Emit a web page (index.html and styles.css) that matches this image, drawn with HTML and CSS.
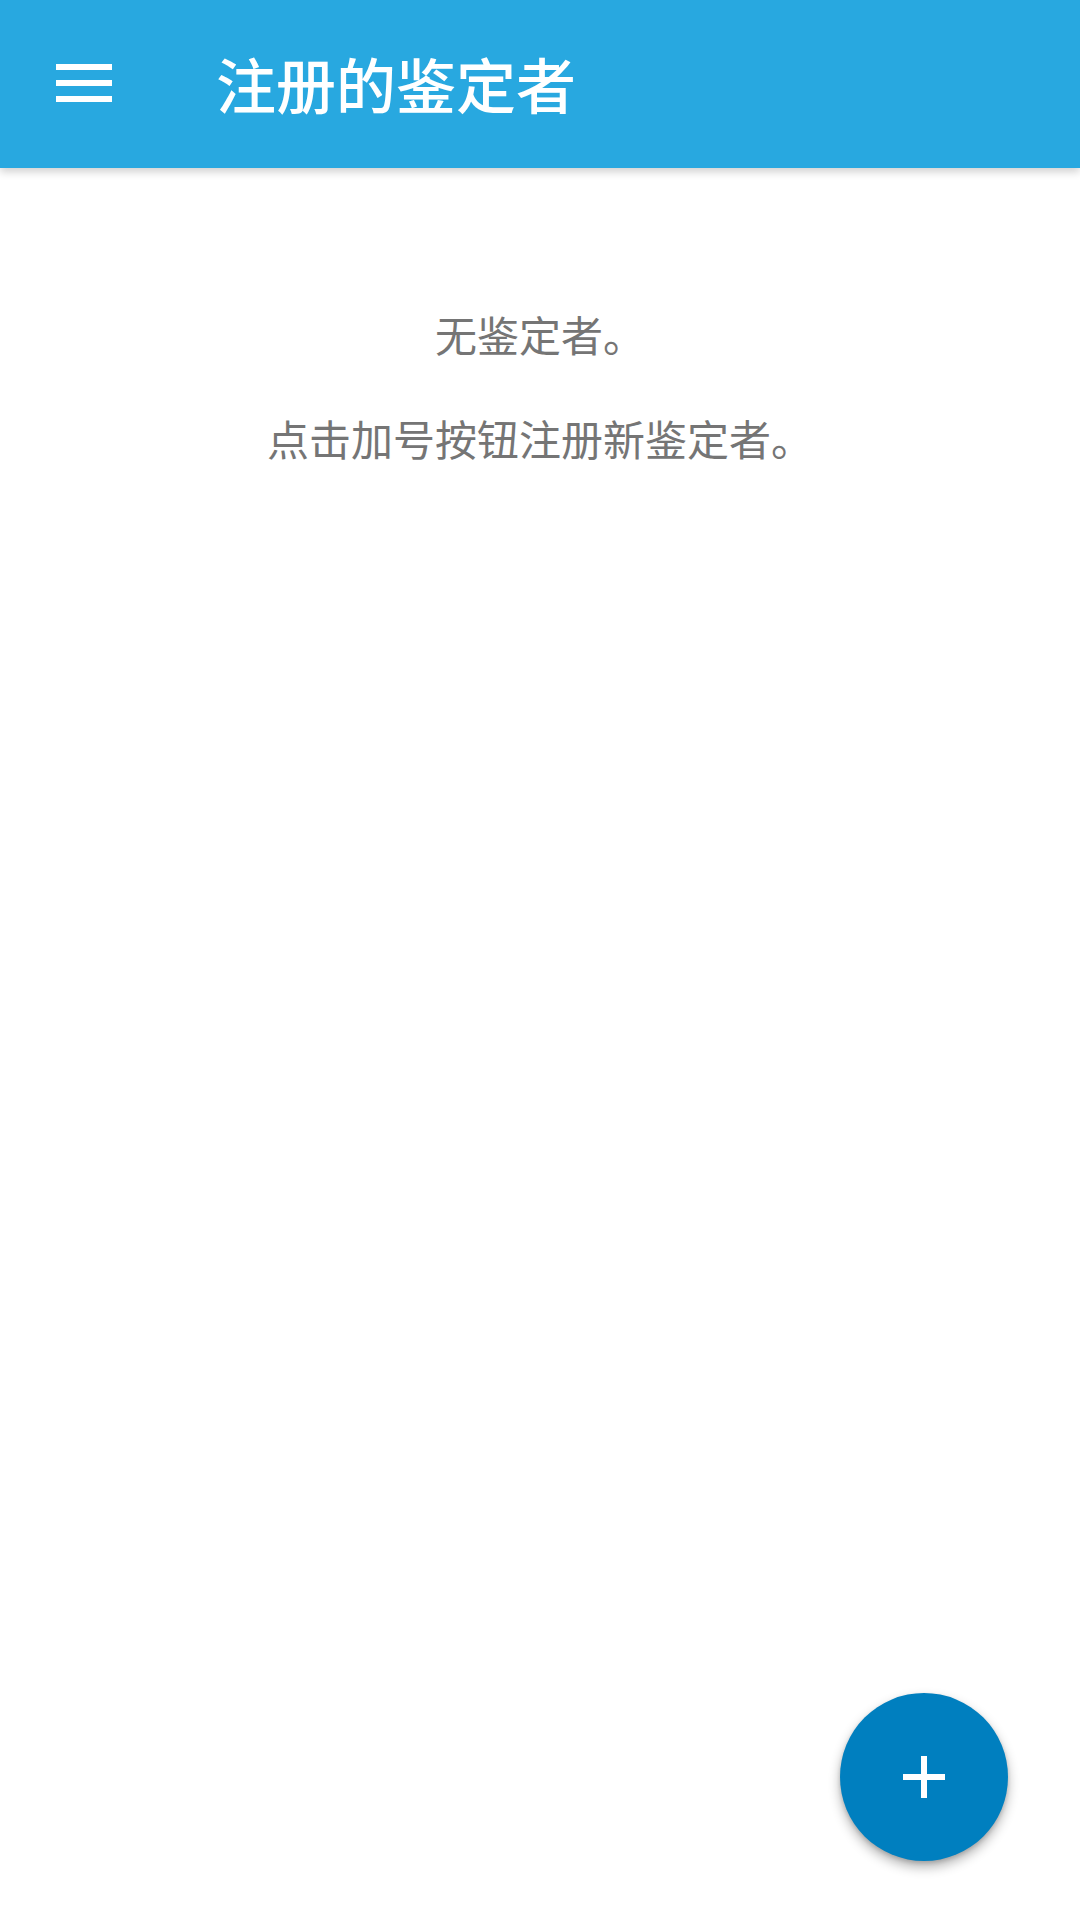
FILE: index.html
```html
<!DOCTYPE html>
<html lang="zh-CN">
<head>
<meta charset="utf-8">
<title>注册的鉴定者</title>
<link rel="stylesheet" href="styles.css">
</head>
<body>
<header class="toolbar">
  <svg class="menu-icon" width="56" height="38" viewBox="0 0 56 38" aria-hidden="true">
    <rect x="0" y="0" width="56" height="6" fill="#fff"/>
    <rect x="0" y="16" width="56" height="6" fill="#fff"/>
    <rect x="0" y="32" width="56" height="6" fill="#fff"/>
  </svg>
  <h1 class="title">注册的鉴定者</h1>
</header>
<main class="empty">
  <p class="empty-line">无鉴定者。</p>
  <p class="empty-line">点击加号按钮注册新鉴定者。</p>
</main>
<button class="fab" aria-label="添加">
  <svg width="42" height="42" viewBox="0 0 42 42" aria-hidden="true">
    <rect x="18" y="0" width="6" height="42" fill="#fff"/>
    <rect x="0" y="18" width="42" height="6" fill="#fff"/>
  </svg>
</button>
</body>
</html>
```

FILE: styles.css
```css
html, body {
  margin: 0;
  padding: 0;
  background: #ffffff;
  width: 1080px;
  height: 1920px;
  overflow: hidden;
  font-family: "Noto Sans CJK SC", "Noto Sans", sans-serif;
}

.toolbar {
  position: relative;
  z-index: 2;
  height: 168px;
  background: #28a8e0;
  display: flex;
  align-items: center;
  padding-left: 56px;
  box-shadow: 0 4px 8px rgba(0, 0, 0, 0.18);
}

.menu-icon {
  display: block;
  flex: none;
  margin-top: -2px;
}

.title {
  margin: -2px 0 0 104px;
  color: #ffffff;
  font-size: 60px;
  font-weight: 500;
  line-height: 60px;
}

.empty {
  padding-top: 136px;
  display: flex;
  flex-direction: column;
  align-items: center;
  gap: 44px;
}

.empty-line {
  margin: 0;
  color: #757575;
  font-size: 42px;
  line-height: 60px;
  text-align: center;
}

.fab {
  position: fixed;
  right: 72px;
  bottom: 59px;
  width: 168px;
  height: 168px;
  border: none;
  border-radius: 50%;
  background: #007fbf;
  padding: 0;
  display: flex;
  align-items: center;
  justify-content: center;
  box-shadow: 0 6px 12px rgba(0, 0, 0, 0.3), 0 2px 4px rgba(0, 0, 0, 0.15);
}

.fab svg {
  display: block;
}
```
